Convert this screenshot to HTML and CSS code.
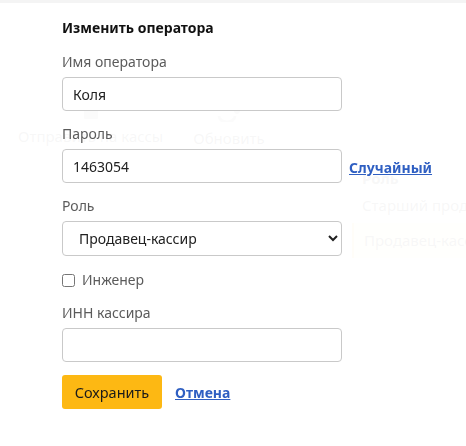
FILE: index.html
```html
<!DOCTYPE html>
<html lang="ru">
<head>
<meta charset="utf-8">
<title>Изменить оператора</title>
<link rel="stylesheet" href="styles.css">
</head>
<body>
<div class="page">
  <div class="topbar"></div>
  <div class="toolbar">
    <div class="tool">
      <svg class="tool-icon" width="16" height="14" viewBox="0 0 16 14"><rect x="1" y="1" width="14" height="12" rx="1" fill="#999"/></svg>
      <span>Отправить на кассы</span>
    </div>
    <div class="tool">
      <svg class="tool-icon" width="28" height="16" viewBox="0 0 28 16"><path d="M4 10a8 6 0 0 0 16 0" fill="none" stroke="#999" stroke-width="3"/><circle cx="22" cy="5" r="3" fill="#999"/></svg>
      <span>Обновить</span>
    </div>
  </div>
  <div class="side">
    <div class="side-head">Роль</div>
    <div class="side-row">Старший продавец</div>
    <div class="side-row selected">Продавец-кассир</div>
  </div>
</div>

<div class="overlay">
  <form class="form">
    <h2 class="title">Изменить оператора</h2>
    <label class="label" for="name">Имя оператора</label>
    <input class="input" id="name" type="text" value="Коля">
    <label class="label" for="pass">Пароль</label>
    <div class="row">
      <input class="input" id="pass" type="text" value="1463054">
      <a class="link" href="#">Случайный</a>
    </div>
    <label class="label" for="role">Роль</label>
    <select class="input select" id="role">
      <option>Продавец-кассир</option>
      <option>Старший продавец</option>
    </select>
    <label class="check"><input type="checkbox" class="checkbox"> <span>Инженер</span></label>
    <label class="label" for="inn">ИНН кассира</label>
    <input class="input" id="inn" type="text" value="">
    <div class="actions">
      <button type="button" class="btn">Сохранить</button>
      <a class="link" href="#">Отмена</a>
    </div>
  </form>
</div>
</body>
</html>
```
FILE: styles.css
```css
html, body {
  margin: 0;
  padding: 0;
  background: #fff;
  font-family: "Noto Sans", "Open Sans", sans-serif;
}
.page {
  width: 466px;
  height: 446px;
  overflow: hidden;
  color: #333;
}
.topbar {
  height: 3px;
  background: #d8d8d8;
}
.toolbar {
  display: flex;
  gap: 30px;
  padding: 103px 0 0 18px;
  font-size: 15px;
  white-space: nowrap;
}
.tool {
  display: flex;
  flex-direction: column;
  align-items: center;
  gap: 6px;
}
.side {
  margin: 20px 0 0 352px;
  font-size: 15px;
  white-space: nowrap;
}
.side-head {
  font-weight: bold;
  padding-left: 10px;
}
.side-row {
  padding: 7px 10px 8px;
}
.selected {
  background: #fff3c4;
  border-left: 2px solid #f2c94c;
}
.overlay {
  position: fixed;
  inset: 0;
  background: rgba(255, 255, 255, 0.96);
}
.overlay::before {
  content: "";
  display: block;
  height: 3px;
  background: rgba(240, 240, 240, 0.7);
}
.form {
  display: flex;
  flex-direction: column;
  align-items: flex-start;
  padding: 15px 0 0 62px;
  font-size: 14px;
}
.title {
  margin: 0 0 14px;
  font-size: 14px;
  font-weight: bold;
  color: #111;
  line-height: 20px;
}
.label {
  color: #5b5b5b;
  line-height: 20px;
  margin-bottom: 5px;
}
.input {
  box-sizing: border-box;
  width: 280px;
  height: 34px;
  margin: 0 0 13px;
  padding: 0 10px;
  border: 1px solid #c9c9c9;
  border-radius: 4px;
  background: #fff;
  font: inherit;
  font-size: 14px;
  color: #212121;
}
.row {
  display: flex;
  align-items: flex-start;
  gap: 7px;
}
.row .link {
  margin-top: 9px;
}
.select {
  height: 35px;
  padding: 0 8px 0 12px;
  margin-bottom: 14px;
}
.check {
  display: flex;
  align-items: center;
  gap: 7px;
  color: #5b5b5b;
  line-height: 20px;
  margin-bottom: 13px;
}
.checkbox {
  margin: 0;
  width: 13px;
  height: 13px;
}
.link {
  color: #2f5fc2;
  font-weight: bold;
  text-decoration: underline;
}
.actions {
  display: flex;
  align-items: center;
  gap: 13px;
}
.btn {
  width: 100px;
  height: 34px;
  border: none;
  border-radius: 3px;
  background: #fdb813;
  color: #1a1a1a;
  font: inherit;
  font-size: 14.5px;
  cursor: pointer;
}
```
